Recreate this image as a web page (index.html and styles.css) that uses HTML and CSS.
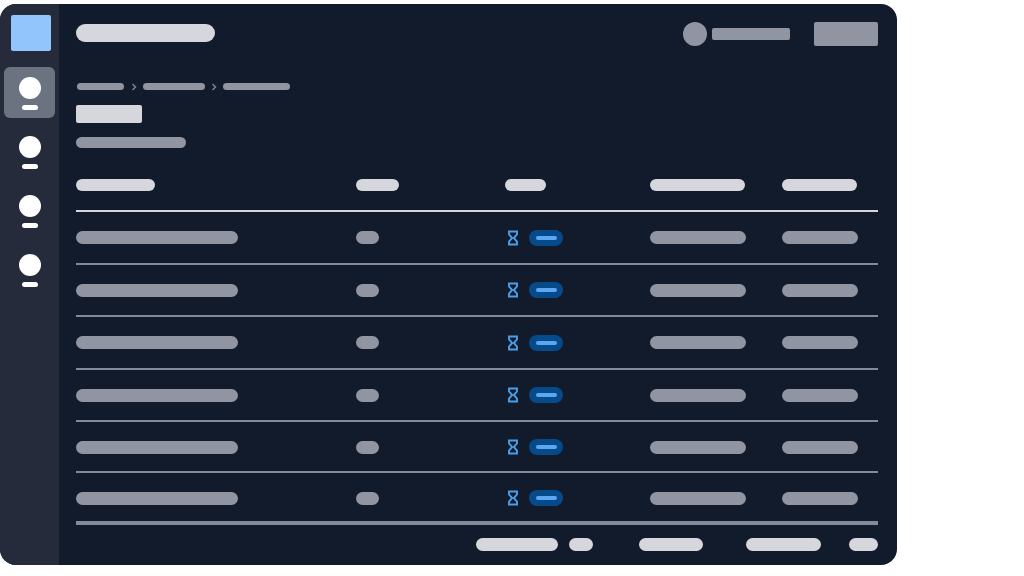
FILE: index.html
```html
<!DOCTYPE html>
<html lang="en">
<head>
    <meta charset="UTF-8">
    <meta name="viewport" content="width=device-width, initial-scale=1.0">
    <title>Skeleton table</title>
    <link rel="stylesheet" href="styles.css">
</head>
<body>
    <div class="app">
        <nav class="sidebar">
            <div class="logo"></div>
            <div class="nav-item active"><span class="nav-dot"></span><span class="nav-label"></span></div>
            <div class="nav-item"><span class="nav-dot"></span><span class="nav-label"></span></div>
            <div class="nav-item"><span class="nav-dot"></span><span class="nav-label"></span></div>
            <div class="nav-item"><span class="nav-dot"></span><span class="nav-label"></span></div>
        </nav>

        <main class="main">
            <header class="topbar">
                <span class="app-title"></span>
                <div class="user">
                    <span class="avatar"></span>
                    <span class="user-name"></span>
                    <span class="user-button"></span>
                </div>
            </header>

            <div class="breadcrumb">
                <span class="crumb crumb-1"></span>
                <svg class="chevron" viewBox="0 0 6 8"><path d="M1.5 1 4.5 4 1.5 7"/></svg>
                <span class="crumb crumb-2"></span>
                <svg class="chevron chevron-2" viewBox="0 0 6 8"><path d="M1.5 1 4.5 4 1.5 7"/></svg>
                <span class="crumb crumb-3"></span>
            </div>
            <div class="page-title"></div>
            <div class="page-sub"></div>

            <div class="table">
                <div class="row head">
                    <span class="cell h1"></span>
                    <span class="cell h2"></span>
                    <span class="cell h3"></span>
                    <span class="cell h4"></span>
                    <span class="cell h5"></span>
                </div>
                <div class="row">
                    <span class="cell c1"></span>
                    <span class="cell c2"></span>
                    <div class="status">
                        <svg class="hourglass" viewBox="0 0 12 16"><path d="M2 1.5h8v3L6.8 8l3.2 3.5v3H2v-3L5.2 8 2 4.5z"/></svg>
                        <span class="badge"><span class="badge-text"></span></span>
                    </div>
                    <span class="cell c4"></span>
                    <span class="cell c5"></span>
                </div>
                <div class="row">
                    <span class="cell c1"></span>
                    <span class="cell c2"></span>
                    <div class="status">
                        <svg class="hourglass" viewBox="0 0 12 16"><path d="M2 1.5h8v3L6.8 8l3.2 3.5v3H2v-3L5.2 8 2 4.5z"/></svg>
                        <span class="badge"><span class="badge-text"></span></span>
                    </div>
                    <span class="cell c4"></span>
                    <span class="cell c5"></span>
                </div>
                <div class="row">
                    <span class="cell c1"></span>
                    <span class="cell c2"></span>
                    <div class="status">
                        <svg class="hourglass" viewBox="0 0 12 16"><path d="M2 1.5h8v3L6.8 8l3.2 3.5v3H2v-3L5.2 8 2 4.5z"/></svg>
                        <span class="badge"><span class="badge-text"></span></span>
                    </div>
                    <span class="cell c4"></span>
                    <span class="cell c5"></span>
                </div>
                <div class="row">
                    <span class="cell c1"></span>
                    <span class="cell c2"></span>
                    <div class="status">
                        <svg class="hourglass" viewBox="0 0 12 16"><path d="M2 1.5h8v3L6.8 8l3.2 3.5v3H2v-3L5.2 8 2 4.5z"/></svg>
                        <span class="badge"><span class="badge-text"></span></span>
                    </div>
                    <span class="cell c4"></span>
                    <span class="cell c5"></span>
                </div>
                <div class="row short">
                    <span class="cell c1"></span>
                    <span class="cell c2"></span>
                    <div class="status">
                        <svg class="hourglass" viewBox="0 0 12 16"><path d="M2 1.5h8v3L6.8 8l3.2 3.5v3H2v-3L5.2 8 2 4.5z"/></svg>
                        <span class="badge"><span class="badge-text"></span></span>
                    </div>
                    <span class="cell c4"></span>
                    <span class="cell c5"></span>
                </div>
                <div class="row last">
                    <span class="cell c1"></span>
                    <span class="cell c2"></span>
                    <div class="status">
                        <svg class="hourglass" viewBox="0 0 12 16"><path d="M2 1.5h8v3L6.8 8l3.2 3.5v3H2v-3L5.2 8 2 4.5z"/></svg>
                        <span class="badge"><span class="badge-text"></span></span>
                    </div>
                    <span class="cell c4"></span>
                    <span class="cell c5"></span>
                </div>
            </div>

            <footer class="pager">
                <span class="pager-pill p1"></span>
                <span class="pager-pill p2"></span>
                <span class="pager-pill p3"></span>
                <span class="pager-pill p4"></span>
                <span class="pager-pill p5"></span>
            </footer>
        </main>
    </div>
</body>
</html>
```

FILE: styles.css
```css
body {
    margin: 0;
    background: #fff;
}
.app {
    display: flex;
    width: 897px;
    height: 561px;
    margin-top: 4px;
    background: #111b2b;
    border-radius: 16px;
    overflow: hidden;
}

/* sidebar */
.sidebar {
    width: 59px;
    flex: none;
    display: flex;
    flex-direction: column;
    align-items: center;
    background: #252b3b;
}
.logo {
    width: 40px;
    height: 36px;
    margin: 11px 0 16px 2px;
    background: #93c5fd;
    border-radius: 2px;
}
.nav-item {
    width: 51px;
    height: 51px;
    margin-bottom: 8px;
    display: flex;
    flex-direction: column;
    align-items: center;
    padding-top: 10px;
    box-sizing: border-box;
    border-radius: 6px;
}
.nav-item.active {
    background: #6b7280;
}
.nav-dot {
    width: 22px;
    height: 22px;
    background: #fff;
    border-radius: 50%;
}
.nav-label {
    width: 16px;
    height: 5px;
    margin-top: 6px;
    background: #fff;
    border-radius: 3px;
}

/* main area */
.main {
    flex: 1;
    padding: 0 20px 0 17px;
    display: flex;
    flex-direction: column;
}
.topbar {
    height: 42px;
    margin-top: 9px;
    display: flex;
    justify-content: space-between;
    align-items: center;
}
.app-title {
    width: 139px;
    height: 18px;
    margin-bottom: 2px;
    background: #d5d7dc;
    border-radius: 9px;
}
.user {
    display: flex;
    align-items: center;
}
.avatar {
    width: 24px;
    height: 24px;
    background: #9195a2;
    border-radius: 50%;
}
.user-name {
    width: 78px;
    height: 12px;
    margin-left: 5px;
    background: #9195a2;
    border-radius: 2px;
}
.user-button {
    width: 64px;
    height: 24px;
    margin-left: 24px;
    background: #9195a2;
    border-radius: 2px;
}

.breadcrumb {
    display: flex;
    align-items: center;
    height: 7px;
    margin-top: 28px;
    padding-left: 1px;
}
.crumb {
    height: 7px;
    background: #9195a2;
    border-radius: 4px;
}
.crumb-1 { width: 47px; }
.crumb-2 { width: 62px; }
.crumb-3 { width: 67px; }
.chevron {
    width: 6px;
    height: 8px;
    margin: 0 6px 0 7px;
    fill: none;
    stroke: #7b8190;
    stroke-width: 1.5;
}
.chevron-2 {
    margin: 0 6px;
}
.page-title {
    width: 66px;
    height: 18px;
    margin-top: 15px;
    background: #d5d7dc;
    border-radius: 2px;
}
.page-sub {
    width: 110px;
    height: 11px;
    margin-top: 14px;
    background: #9195a2;
    border-radius: 6px;
}

/* table */
.table {
    margin-top: 17px;
}
.row {
    display: grid;
    grid-template-columns: 280px 149px 145px 132px 1fr;
    align-items: center;
    height: 52.5px;
    padding-top: 1px;
    box-sizing: border-box;
    border-bottom: 2px solid #858a98;
}
.row.head {
    height: 47px;
    padding: 0 0 5px;
    border-bottom-color: #d5d7dc;
}
.row.short {
    height: 51px;
}
.row.last {
    height: 52px;
    padding-top: 2px;
    border-bottom-width: 4px;
}
.cell {
    height: 13px;
    background: #9195a2;
    border-radius: 7px;
}
.head .cell {
    height: 12px;
    background: #d5d7dc;
}
.h1 { width: 79px; }
.h2 { width: 43px; }
.h3 { width: 41px; }
.h4 { width: 95px; }
.h5 { width: 75px; }
.c1 { width: 162px; }
.c2 { width: 23px; }
.c4 { width: 96px; }
.c5 { width: 76px; }
.status {
    display: flex;
    align-items: center;
    padding-left: 2px;
}
.hourglass {
    width: 12px;
    height: 16px;
    fill: none;
    stroke: #4a9fea;
    stroke-width: 1.9;
}
.badge {
    width: 34px;
    height: 16px;
    margin-left: 10px;
    display: flex;
    align-items: center;
    justify-content: center;
    background: #064a8a;
    border-radius: 8px;
}
.badge-text {
    width: 21px;
    height: 4px;
    background: #5ba8f2;
    border-radius: 2px;
}

/* pager */
.pager {
    display: flex;
    margin-top: 13px;
    padding-left: 400px;
}
.pager-pill {
    height: 13px;
    background: #d5d7dc;
    border-radius: 7px;
}
.p1 { width: 82px; }
.p2 { width: 24px; margin-left: 11px; }
.p3 { width: 64px; margin-left: 46px; }
.p4 { width: 75px; margin-left: 43px; }
.p5 { width: 29px; margin-left: 28px; }
```
